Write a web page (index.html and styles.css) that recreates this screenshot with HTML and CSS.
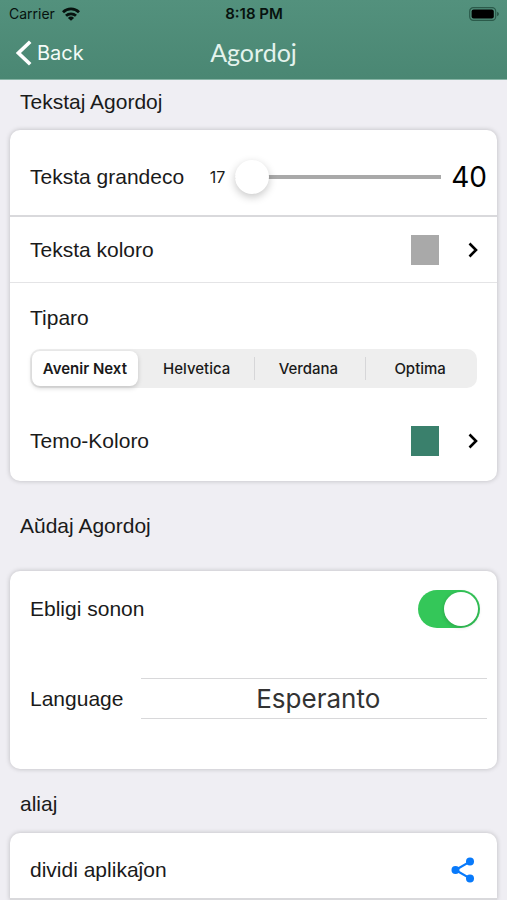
FILE: index.html
```html
<!DOCTYPE html>
<html lang="eo">
<head>
<meta charset="utf-8">
<meta name="viewport" content="width=device-width, initial-scale=1">
<title>Agordoj</title>
<link rel="stylesheet" href="styles.css">
</head>
<body>
<header class="topbar">
  <div class="status">
    <span class="carrier">Carrier
      <svg class="wifi" viewBox="0 0 18 14" aria-hidden="true"><g fill="none" stroke="#07120e" stroke-width="2.8"><path d="M1 5.2a11.4 11.4 0 0 1 16 0"/><path d="M4 8.8a7.2 7.2 0 0 1 10 0"/></g><path d="M9 13.8 5.9 10.9a4.4 4.4 0 0 1 6.2 0z" fill="#07120e"/></svg>
    </span>
    <time class="clock">8:18 PM</time>
    <svg class="battery" viewBox="0 0 30 14" aria-hidden="true"><rect x=".7" y=".7" width="26" height="12.6" rx="3.6" fill="none" stroke="#2b5a4a" stroke-width="1.2"/><rect x="2.6" y="2.6" width="22.2" height="8.8" rx="2" fill="#000"/><path d="M28 4.8q2 .7 2 2.2t-2 2.2z" fill="#2b5a4a"/></svg>
  </div>
  <nav class="nav">
    <a class="back" href="#"><svg class="back-icon" viewBox="0 0 16 26" aria-hidden="true"><path d="M14.2 1.8 2.4 13l11.8 11.2" fill="none" stroke="#fff" stroke-width="3.6"/></svg>Back</a>
    <h1 class="title">Agordoj</h1>
  </nav>
</header>
<main class="content">
  <h2 class="heading">Tekstaj Agordoj</h2>
  <section class="card">
    <div class="row row-size">
      <label for="size">Teksta grandeco</label>
      <span class="min">17</span>
      <input class="slider" id="size" type="range" min="17" max="40" value="17">
      <span class="max">40</span>
    </div>
    <button class="row row-color" type="button">
      <span>Teksta koloro</span>
      <span class="swatch swatch-gray"></span>
      <svg class="chevron" viewBox="0 0 10 16" aria-hidden="true"><path d="M1.5 1.5 8 8l-6.5 6.5" fill="none" stroke="#000" stroke-width="2.6"/></svg>
    </button>
    <fieldset class="fonts">
      <legend class="legend">Tiparo</legend>
      <div class="segments">
        <label class="segment"><input type="radio" name="font" checked><span>Avenir Next</span></label>
        <label class="segment"><input type="radio" name="font"><span>Helvetica</span></label>
        <label class="segment"><input type="radio" name="font"><span>Verdana</span></label>
        <label class="segment"><input type="radio" name="font"><span>Optima</span></label>
      </div>
    </fieldset>
    <button class="row row-theme" type="button">
      <span>Temo-Koloro</span>
      <span class="swatch swatch-green"></span>
      <svg class="chevron" viewBox="0 0 10 16" aria-hidden="true"><path d="M1.5 1.5 8 8l-6.5 6.5" fill="none" stroke="#000" stroke-width="2.6"/></svg>
    </button>
  </section>

  <h2 class="heading heading-audio">Aŭdaj Agordoj</h2>
  <section class="card">
    <div class="row row-sound">
      <label for="sound">Ebligi sonon</label>
      <input class="switch" id="sound" type="checkbox" role="switch" checked>
    </div>
    <div class="row row-language">
      <label for="language">Language</label>
      <select class="picker" id="language"><option>Esperanto</option></select>
    </div>
  </section>

  <h2 class="heading heading-other">aliaj</h2>
  <section class="card card-open">
    <button class="row row-share" type="button">
      <span>dividi aplikaĵon</span>
      <svg class="share" viewBox="0 0 24 26" aria-hidden="true"><g fill="#087afb"><path d="M4.5 13 19 4.6M4.5 13 19 21.4" stroke="#087afb" stroke-width="2.2"/><circle cx="4.5" cy="13" r="4"/><circle cx="19" cy="4.6" r="4"/><circle cx="19" cy="21.4" r="4"/></g></svg>
    </button>
  </section>
</main>
</body>
</html>
```
FILE: styles.css
```css
* { box-sizing: border-box; }
body {
  margin: 0;
  background: #efeef3;
  color: #1a1a1a;
  font-family: "Liberation Sans", sans-serif;
  font-size: 21px;
  line-height: 24px;
}
button, input, select { font: inherit; color: inherit; }

.topbar {
  background: linear-gradient(#53917d, #4a8773);
  border-bottom: 1px solid #88b5a6;
}
.status {
  display: grid;
  grid-template-columns: 1fr auto 1fr;
  align-items: center;
  height: 28px;
  padding: 0 8px 0 9px;
  color: #07120e;
  font-family: Inter, sans-serif;
  font-size: 14px;
  line-height: 18px;
}
.carrier { display: flex; align-items: center; gap: 7px; }
.wifi { width: 18px; height: 14px; }
.clock { font-size: 15px; font-weight: 600; }
.battery { width: 30px; height: 14px; justify-self: end; }
.nav {
  display: grid;
  grid-template-columns: 1fr auto 1fr;
  align-items: center;
  height: 51px;
  padding: 0 16px 2px;
  color: #fff;
}
.back {
  display: flex;
  align-items: center;
  gap: 5px;
  color: #f4fbf8;
  font-family: Inter, sans-serif;
  font-size: 20px;
  text-decoration: none;
}
.back-icon { width: 16px; height: 26px; }
.title {
  margin: 0;
  padding-bottom: 2px;
  color: #e4f3ed;
  font-family: Lato, sans-serif;
  font-size: 25px;
  font-weight: 400;
}

.content { padding: 0 10px; }
.heading {
  margin: 0;
  padding: 10px 10px 16px;
  font-size: 21px;
  font-weight: 400;
}
.heading-audio { padding: 33px 10px; }
.heading-other { padding: 23px 10px 17px; }

.card {
  overflow: hidden;
  border-radius: 10px;
  background: #fff;
  box-shadow: 0 0 5px rgb(0 0 0 / 22%);
}
.card-open { border-radius: 10px 10px 0 0; }
.row {
  display: flex;
  align-items: center;
  width: 100%;
  margin: 0;
  padding: 0 19px 0 20px;
  border: 0;
  background: none;
  text-align: left;
}

.row-size {
  height: 87px;
  padding: 9px 10px 0 20px;
  border-bottom: 2px solid #d9d9dc;
}
.min { margin: 0 10px 0 auto; font-family: Inter, sans-serif; font-size: 16px; }
.max { margin-left: 10px; color: #000; font-family: Inter, sans-serif; font-size: 28px; }
.slider {
  flex: 0 1 206px;
  min-width: 80px;
  height: 34px;
  margin: 0;
  appearance: none;
  background: linear-gradient(#a9a9a9, #a9a9a9) center / 100% 4px no-repeat;
}
.slider::-webkit-slider-thumb {
  width: 34px;
  height: 34px;
  appearance: none;
  border-radius: 50%;
  background: #fff;
  box-shadow: 0 3px 9px rgb(0 0 0 / 22%);
}

.row-color { height: 66px; border-bottom: 1px solid #e4e4e6; }
.swatch { width: 28px; height: 30px; margin: 0 29px 0 auto; }
.swatch-gray { background: #a9a9a9; }
.swatch-green { background: #3a806c; }
.chevron { width: 10px; height: 16px; }

.fonts { margin: 0; padding: 23px 20px 0; border: 0; }
.legend { float: left; width: 100%; margin-bottom: 19px; padding: 0; }
.segments {
  display: grid;
  grid-template-columns: repeat(4, 1fr);
  clear: both;
  height: 39px;
  border-radius: 10px;
  background: #eee;
}
.segment {
  position: relative;
  display: grid;
  padding: 2px 4px 2px 2px;
  font-family: Inter, sans-serif;
  font-size: 15px;
}
.segment input { position: absolute; opacity: 0; margin: 0; }
.segment span {
  display: grid;
  place-items: center;
  border-radius: 8px;
  font-weight: 500;
  white-space: nowrap;
}
.segment input:checked + span {
  background: #fff;
  box-shadow: 0 2px 5px rgb(0 0 0 / 18%);
  font-weight: 600;
}
.segment:nth-child(n + 3) {
  background: linear-gradient(#d6d6d8, #d6d6d8) left center / 1px 23px no-repeat;
}
.row-theme { height: 93px; padding-bottom: 0; padding-top: 12px; }

.row-sound { height: 75px; padding-right: 17px; justify-content: space-between; }
.switch {
  position: relative;
  width: 62px;
  height: 38px;
  margin: 0;
  appearance: none;
  border-radius: 19px;
  background: #d9d9dc;
}
.switch::before {
  content: "";
  position: absolute;
  top: 2px;
  left: 2px;
  width: 34px;
  height: 34px;
  border-radius: 50%;
  background: #fff;
  box-shadow: 0 1px 4px rgb(0 0 0 / 20%);
}
.switch:checked { background: #34c759; }
.switch:checked::before { left: auto; right: 2px; }

.row-language { height: 123px; gap: 18px; padding: 0 10px 18px 20px; }
.picker {
  flex: 1;
  min-width: 0;
  height: 41px;
  padding: 0 0 0 8px;
  appearance: none;
  border: solid #d8d8da;
  border-width: 1px 0;
  border-radius: 0;
  background: none;
  color: #333;
  font-family: Inter, sans-serif;
  font-size: 26px;
  line-height: 38px;
  text-align-last: center;
}

.row-share {
  height: 67px;
  padding: 8px 22px 0 20px;
  border-bottom: 2px solid #d9d9dc;
  justify-content: space-between;
}
.share { width: 24px; height: 26px; }
```
